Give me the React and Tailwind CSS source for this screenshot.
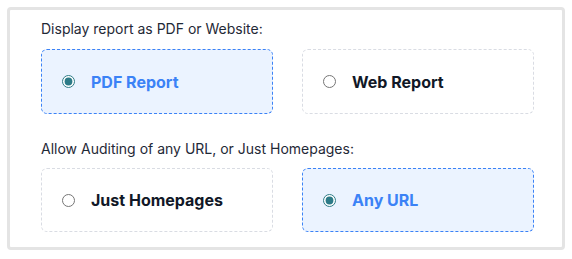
import React, { useState } from "react";

function Option({ name, value, label, checked, onChange, tall }) {
  return (
    <label
      className={`flex items-center ${tall ? "h-[65px]" : "h-[64px]"} pl-[20px] rounded-md border border-dashed cursor-pointer ${
        checked ? "bg-[#ebf3ff] border-[#3b82f6]" : "bg-white border-[#d9dce3]"
      }`}
    >
      <input
        type="radio"
        name={name}
        value={value}
        checked={checked}
        onChange={() => onChange(value)}
        className="w-[13px] h-[13px] accent-[#2c7a87]"
      />
      <span
        className={`ml-[16px] text-base font-bold ${
          checked ? "text-[#3b82f6]" : "text-[#111827]"
        }`}
      >
        {label}
      </span>
    </label>
  );
}

export default function App() {
  const [display, setDisplay] = useState("pdf");
  const [scope, setScope] = useState("any");

  return (
    <div className="p-[7px] bg-white" style={{ fontFamily: "Inter, 'Noto Sans', sans-serif" }}>
      <div className="w-[558px] h-[243px] border-[3px] border-[#e4e4e4] rounded-[4px] pl-[31px] pr-[28px] pt-[9px]">
        <p className="text-sm leading-5 text-[#1f2937] mb-[10px]">Display report as PDF or Website:</p>
        <div className="grid grid-cols-2 gap-[29px]">
          <Option tall name="display" value="pdf" label="PDF Report" checked={display === "pdf"} onChange={setDisplay} />
          <Option tall name="display" value="web" label="Web Report" checked={display === "web"} onChange={setDisplay} />
        </div>

        <p className="text-sm leading-5 text-[#1f2937] mt-[25px] mb-[9px]">
          Allow Auditing of any URL, or Just Homepages:
        </p>
        <div className="grid grid-cols-2 gap-[29px]">
          <Option name="scope" value="home" label="Just Homepages" checked={scope === "home"} onChange={setScope} />
          <Option name="scope" value="any" label="Any URL" checked={scope === "any"} onChange={setScope} />
        </div>
      </div>
    </div>
  );
}
